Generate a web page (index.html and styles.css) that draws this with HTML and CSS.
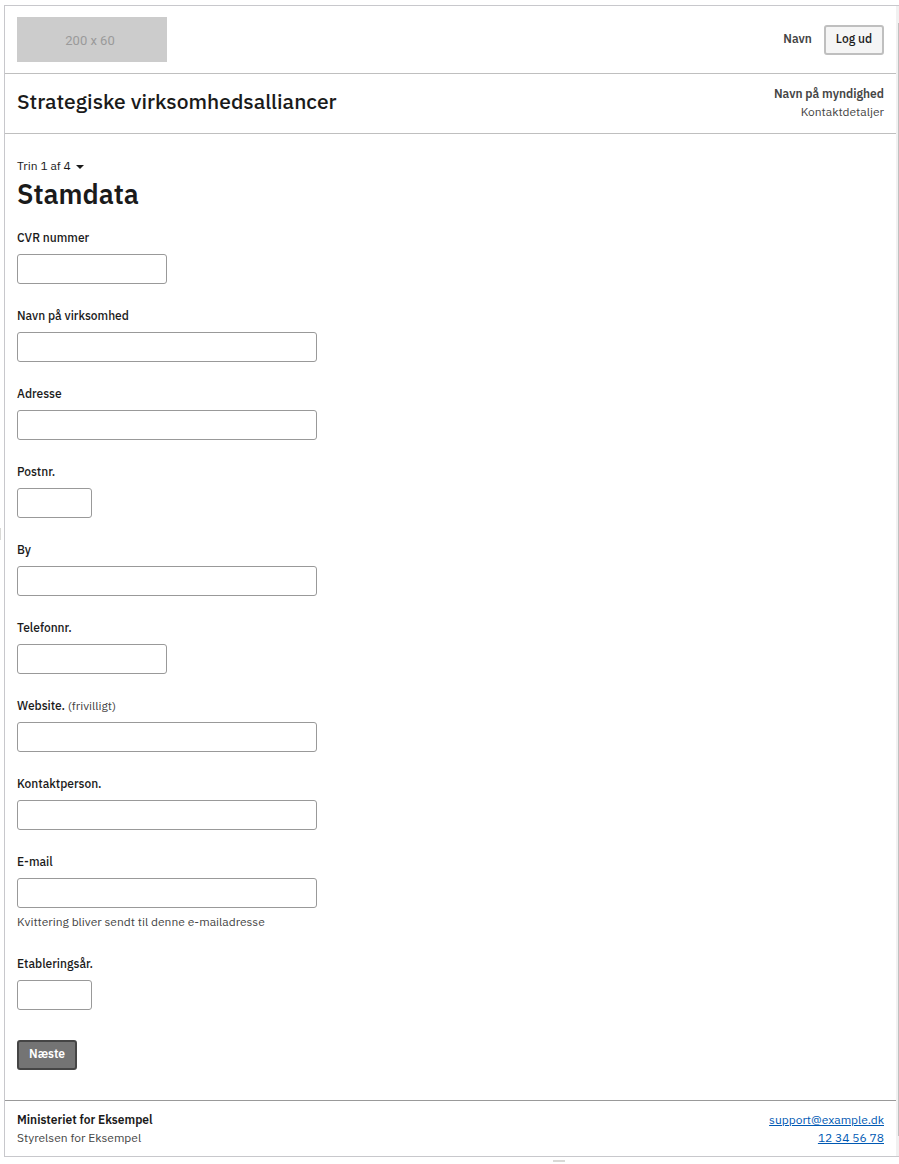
FILE: index.html
```html
<!DOCTYPE html>
<html lang="da">
<head>
<meta charset="utf-8">
<meta name="viewport" content="width=device-width, initial-scale=1">
<title>Strategiske virksomhedsalliancer</title>
<link rel="stylesheet" href="styles.css">
</head>
<body>
<div class="frame">
  <div class="page">
    <header>
      <div class="bar portal">
        <div class="logo">200 x 60</div>
        <div class="user"><strong>Navn</strong><button class="button secondary" type="button">Log ud</button></div>
      </div>
      <div class="bar solution">
        <p class="solution-title">Strategiske virksomhedsalliancer</p>
        <div class="authority"><strong>Navn på myndighed</strong><br>Kontaktdetaljer</div>
      </div>
    </header>
    <main class="main">
      <button class="step" type="button">Trin 1 af 4<svg class="caret" viewBox="0 0 8 4" aria-hidden="true"><path d="M0 0h8L4 4z" fill="currentColor"/></svg></button>
      <h1 class="heading">Stamdata</h1>
      <form class="form">
        <div class="field"><label for="cvr">CVR nummer</label><input class="input medium" id="cvr" type="text"></div>
        <div class="field"><label for="company">Navn på virksomhed</label><input class="input" id="company" type="text"></div>
        <div class="field"><label for="address">Adresse</label><input class="input" id="address" type="text"></div>
        <div class="field"><label for="zip">Postnr.</label><input class="input short" id="zip" type="text"></div>
        <div class="field"><label for="city">By</label><input class="input" id="city" type="text"></div>
        <div class="field"><label for="phone">Telefonnr.</label><input class="input medium" id="phone" type="tel"></div>
        <div class="field"><label for="website">Website. <span class="optional">(frivilligt)</span></label><input class="input" id="website" type="url"></div>
        <div class="field"><label for="contact">Kontaktperson.</label><input class="input" id="contact" type="text"></div>
        <div class="field"><label for="email">E-mail</label><input class="input" id="email" type="email" aria-describedby="email-hint"><span class="hint" id="email-hint">Kvittering bliver sendt til denne e-mailadresse</span></div>
        <div class="field"><label for="year">Etableringsår.</label><input class="input short" id="year" type="text"></div>
        <button class="button primary" type="button">Næste</button>
      </form>
    </main>
    <footer class="bar footer">
      <div class="ministry"><strong>Ministeriet for Eksempel</strong><br>Styrelsen for Eksempel</div>
      <div class="contact"><a href="mailto:support@example.dk">support@example.dk</a><br><a href="tel:12345678">12 34 56 78</a></div>
    </footer>
  </div>
  <div class="track"><div class="thumb"></div></div>
</div>
<div class="handle handle-left"></div>
<div class="handle handle-bottom"></div>
</body>
</html>
```
FILE: styles.css
```css
*, *::before, *::after { box-sizing: border-box; }
body {
  position: relative;
  margin: 0;
  padding: 5px 0 7px 4px;
  background: #fff;
  color: #1a1a1a;
  font: 12px/18px "IBM Plex Sans", "Noto Sans", "Open Sans", sans-serif;
}
strong { font-weight: 600; }
.frame {
  display: flex;
  border: 1px solid #c8c8cc;
  border-right: 0;
}
.page { flex: 1; min-width: 0; }
.bar {
  display: flex;
  align-items: center;
  justify-content: space-between;
  padding: 0 12px;
  border-bottom: 1px solid #bfbfbf;
}
.portal { padding-top: 11px; padding-bottom: 11px; }
.logo {
  display: grid;
  place-items: center;
  width: 150px;
  height: 45px;
  padding-right: 4px;
  padding-top: 2px;
  background: #ccc;
  color: #9a9a9a;
  font: 13px/18px Roboto, "Liberation Sans", sans-serif;
}
.user { display: flex; align-items: center; gap: 12px; color: #454545; }
.user strong { padding-bottom: 2px; }
.button {
  min-width: 60px;
  height: 30px;
  padding: 0 10px 2px;
  border: 2px solid #bfbfbf;
  border-radius: 3px;
  background: #f5f5f5;
  color: #1a1a1a;
  font: inherit;
  font-weight: 500;
}
.button.secondary { margin-top: 1px; }
.button.primary {
  margin-top: 7px;
  border-color: #454545;
  background: #747474;
  color: #fff;
  font-weight: 600;
}
.solution { padding-top: 11px; padding-bottom: 12px; }
.solution-title { margin: 0; padding-bottom: 4px; font-size: 21px; line-height: 28px; font-weight: 500; }
.authority, .contact { color: #454545; text-align: right; }
.main { padding: 23px 12px 30px; }
.step {
  display: flex;
  align-items: center;
  gap: 5px;
  padding: 0;
  border: 0;
  background: none;
  color: #1a1a1a;
  font: inherit;
}
.caret { width: 8px; height: 4px; margin-top: 2px; }
.heading { margin: 0 0 16px; font-size: 27px; line-height: 38px; font-weight: 600; }
.form { display: flex; flex-direction: column; align-items: flex-start; gap: 23px; }
.field { display: flex; flex-direction: column; width: 100%; max-width: 300px; }
.field label { margin-bottom: 7px; font-weight: 500; }
.optional, .hint, .ministry { color: #454545; }
.optional { font-weight: 400; }
.hint { margin-top: 4px; line-height: 20px; }
.input {
  width: 100%;
  height: 30px;
  padding: 0 8px;
  border: 1px solid #999;
  border-radius: 3px;
  background: #fff;
  font: inherit;
}
.input.medium { width: 50%; }
.input.short { width: 25%; }
.footer { padding-top: 10px; padding-bottom: 9px; border-top: 1px solid #999; border-bottom: 0; }
.ministry strong { color: #1a1a1a; }
.contact a { color: #0059b3; }
.track { width: 3px; padding: 17px 0 20px 2px; background: #f1f1f1; }
.thumb { height: 100%; background: #c1c1c1; }
.handle { position: absolute; background: #d9d9d6; }
.handle-left { left: 0; top: 528px; width: 1px; height: 12px; }
.handle-bottom { left: 553px; bottom: 2px; width: 12px; height: 2px; }
```
